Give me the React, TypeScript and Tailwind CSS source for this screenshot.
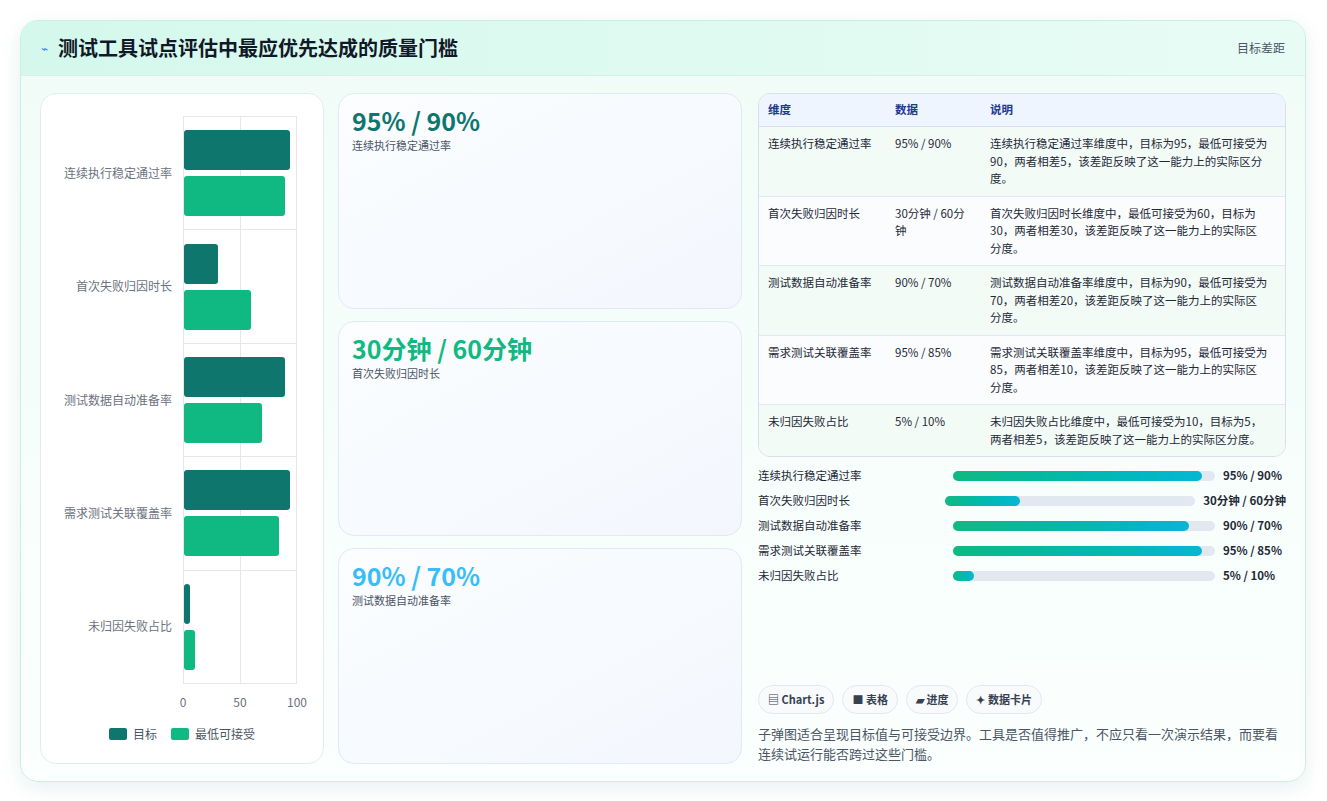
import React from "react";

const rows = [
  { name: "连续执行稳定通过率", t: 95, m: 90, v: "95% / 90%", d: "连续执行稳定通过率维度中，目标为95，最低可接受为90，两者相差5，该差距反映了这一能力上的实际区分度。", p: 95 },
  { name: "首次失败归因时长", t: 30, m: 60, v: "30分钟 / 60分钟", d: "首次失败归因时长维度中，最低可接受为60，目标为30，两者相差30，该差距反映了这一能力上的实际区分度。", p: 30 },
  { name: "测试数据自动准备率", t: 90, m: 70, v: "90% / 70%", d: "测试数据自动准备率维度中，目标为90，最低可接受为70，两者相差20，该差距反映了这一能力上的实际区分度。", p: 90 },
  { name: "需求测试关联覆盖率", t: 95, m: 85, v: "95% / 85%", d: "需求测试关联覆盖率维度中，目标为95，最低可接受为85，两者相差10，该差距反映了这一能力上的实际区分度。", p: 95 },
  { name: "未归因失败占比", t: 5, m: 10, v: "5% / 10%", d: "未归因失败占比维度中，最低可接受为10，目标为5，两者相差5，该差距反映了这一能力上的实际区分度。", p: 8 },
];

const font = { fontFamily: '"Noto Sans CJK SC", "Noto Sans", sans-serif' };

function Chart() {
  return (
    <div className="flex-1 bg-white border border-[#e2ecf0] rounded-2xl flex flex-col pt-[22px] pb-[20px] pl-[12px] pr-[26px]">
      <div className="flex flex-1">
        <div className="w-[130px] flex flex-col pb-[36px]">
          {rows.map((r) => (
            <div key={r.name} className="flex-1 flex items-center justify-end pr-[11px] text-[12px] text-[#6b7280]">{r.name}</div>
          ))}
        </div>
        <div className="flex-1 flex flex-col">
          <div className="relative flex-1 border-l border-t border-r border-[#e5e7eb] flex flex-col">
            <div className="absolute top-0 bottom-0 left-1/2 w-px bg-[#e5e7eb]" />
            {rows.map((r, i) => (
              <div key={r.name} className={`relative flex-1 flex flex-col justify-center gap-[6px] ${i < 4 ? "border-b border-[#e5e7eb]" : ""}`}>
                <div className="h-[40px] bg-[#0f766e] rounded-[3px]" style={{ width: `${r.t}%` }} />
                <div className="h-[40px] bg-[#10b981] rounded-[3px]" style={{ width: `${r.m}%` }} />
              </div>
            ))}
          </div>
          <div className="relative h-[36px] text-[12px] text-[#6b7280] border-t border-[#e5e7eb]">
            <span className="absolute left-0 -translate-x-1/2 top-[9px]">0</span>
            <span className="absolute left-1/2 -translate-x-1/2 top-[9px]">50</span>
            <span className="absolute left-full -translate-x-1/2 top-[9px]">100</span>
          </div>
        </div>
      </div>
      <div className="flex justify-center gap-[14px] text-[12px] text-[#4b5563] mt-[6px] pl-[14px]">
        <span className="flex items-center gap-[6px]"><span className="w-[18px] h-[12px] bg-[#0f766e] rounded-[2px]" />目标</span>
        <span className="flex items-center gap-[6px]"><span className="w-[18px] h-[12px] bg-[#10b981] rounded-[2px]" />最低可接受</span>
      </div>
    </div>
  );
}

const cards = [
  { v: "95% / 90%", l: "连续执行稳定通过率", c: "text-[#0f766e]" },
  { v: "30分钟 / 60分钟", l: "首次失败归因时长", c: "text-[#10b981]" },
  { v: "90% / 70%", l: "测试数据自动准备率", c: "text-[#38bdf8]" },
];

export default function App() {
  return (
    <div className="w-[1327px] h-[801px] bg-white p-[20px]" style={font}>
      <div className="w-[1286px] h-[762px] rounded-[18px] border border-[#c9efe4] shadow-[0_6px_20px_rgba(15,118,110,0.10)] overflow-hidden flex flex-col bg-gradient-to-b from-[#f0fcf7] to-[#fbfffe]">
        <div className="h-[55px] flex items-center justify-between px-[20px] bg-gradient-to-r from-[#d4f8ec] to-[#e8fcf5] border-b border-[#d5f1e8]">
          <div className="flex items-center gap-[10px]">
            <span className="text-[#3b82f6] text-[12px]">⌁</span>
            <h1 className="text-[20px] font-bold text-[#111827]">测试工具试点评估中最应优先达成的质量门槛</h1>
          </div>
          <span className="text-[12px] text-[#4b5563]">目标差距</span>
        </div>
        <div className="flex-1 flex gap-[14px] px-[19px] pt-[17px] pb-[17px]">
          <div className="w-[284px] flex"><Chart /></div>
          <div className="w-[404px] flex flex-col gap-[12px]">
            {cards.map((c) => (
              <div key={c.l} className="flex-1 rounded-2xl border border-[#e0eaf2] bg-gradient-to-br from-[#fbfdff] to-[#f3f7fd] px-[13px] pt-[10px]">
                <div className={`text-[25px] font-bold leading-[32px] ${c.c}`}>{c.v}</div>
                <div className="text-[11px] text-[#4b5563] mt-[1px]">{c.l}</div>
              </div>
            ))}
          </div>
          <div className="flex-1 flex flex-col pl-[2px]">
            <div className="rounded-xl border border-[#d6e0ea] overflow-hidden text-[11.5px] text-[#1f2937]">
              <div className="grid grid-cols-[127px_95px_1fr] bg-[#eef5ff] h-[33px] items-center px-[9px] font-semibold text-[#1e3a8a] border-b border-[#d6e0ea]">
                <span>维度</span><span>数据</span><span>说明</span>
              </div>
              {rows.map((r, i) => (
                <div key={r.name} className={`grid grid-cols-[127px_95px_1fr] px-[9px] py-[8px] leading-[17.5px] ${i < 4 ? "border-b border-[#e2e8f0]" : ""} ${i % 2 === 0 ? "bg-[#f3fbf7]" : "bg-[#fafcfd]"}`}>
                  <span>{r.name}</span><span className="pr-[14px]">{r.v}</span><span className="pr-[8px]">{r.d}</span>
                </div>
              ))}
            </div>
            <div className="mt-[10px] flex flex-col gap-[7px]">
              {rows.map((r) => (
                <div key={r.name} className="grid grid-cols-[1fr_1.4fr_auto] gap-[8px] items-center h-[18px] text-[11.5px] text-[#1f2937]">
                  <span>{r.name}</span>
                  <div className="h-[10px] rounded-full bg-[#e2e8f0]">
                    <div className="h-full rounded-full bg-gradient-to-r from-[#10b981] to-[#06b6d4]" style={{ width: `${r.p}%` }} />
                  </div>
                  <span className="font-bold min-w-[63px]">{r.v}</span>
                </div>
              ))}
            </div>
            <div className="flex-1" />
            <div className="flex gap-[8px] text-[11px] font-semibold text-[#374151]">
              <span className="h-[29px] px-[9px] rounded-full border border-[#e2e8f0] bg-[#f8fafc] flex items-center gap-[4px]">▤ Chart.js</span>
              <span className="h-[29px] px-[9px] rounded-full border border-[#e2e8f0] bg-[#f8fafc] flex items-center gap-[4px]">■ 表格</span>
              <span className="h-[29px] px-[9px] rounded-full border border-[#e2e8f0] bg-[#f8fafc] flex items-center gap-[4px]">▰ 进度</span>
              <span className="h-[29px] px-[9px] rounded-full border border-[#e2e8f0] bg-[#f8fafc] flex items-center gap-[4px]">✦ 数据卡片</span>
            </div>
            <p className="mt-[10px] text-[13px] leading-[20px] text-[#4b5563] pr-[6px]">子弹图适合呈现目标值与可接受边界。工具是否值得推广，不应只看一次演示结果，而要看连续试运行能否跨过这些门槛。</p>
          </div>
        </div>
      </div>
    </div>
  );
}
